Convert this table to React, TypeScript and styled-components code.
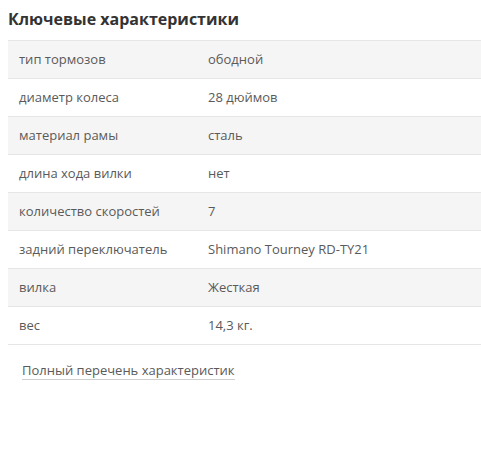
import React from "react";
import styled, { createGlobalStyle } from "styled-components";

const Global = createGlobalStyle`
  html, body { margin: 0; padding: 0; background: #fff; }
  body { font-family: "Open Sans", "Liberation Sans", sans-serif; }
`;

const Page = styled.div`
  padding: 6px 0 0 8px;
`;

const Title = styled.h2`
  margin: 0 0 8px 0;
  font-size: 16px;
  line-height: 26px;
  font-weight: 700;
  color: #333;
`;

const Table = styled.div`
  display: flex;
  flex-direction: column;
  border-bottom: 1px solid #e6e6e6;
`;

const Row = styled.div<{ $shaded: boolean }>`
  display: grid;
  grid-template-columns: 200px 1fr;
  height: 37px;
  align-items: center;
  border-top: 1px solid #e6e6e6;
  background: ${(p) => (p.$shaded ? "#f6f5f5" : "#fff")};
  font-size: 13px;
  line-height: 18px;
  color: #5a5a5a;
`;

const Label = styled.div`
  padding-left: 11px;
  padding-bottom: 1px;
`;

const Value = styled.div`
  padding-bottom: 1px;
`;

const LinkWrap = styled.div`
  padding: 13px 0 0 14px;
`;

const Link = styled.a`
  display: inline-block;
  font-size: 13px;
  line-height: 18px;
  color: #5a5a5a;
  text-decoration: none;
  border-bottom: 1px solid #cfcfcf;
`;

const rows: [string, string][] = [
  ["тип тормозов", "ободной"],
  ["диаметр колеса", "28 дюймов"],
  ["материал рамы", "сталь"],
  ["длина хода вилки", "нет"],
  ["количество скоростей", "7"],
  ["задний переключатель", "Shimano Tourney RD-TY21"],
  ["вилка", "Жесткая"],
  ["вес", "14,3 кг."],
];

export default function App() {
  return (
    <Page>
      <Global />
      <Title>Ключевые характеристики</Title>
      <Table>
        {rows.map(([k, v], i) => (
          <Row key={k} $shaded={i % 2 === 0}>
            <Label>{k}</Label>
            <Value>{v}</Value>
          </Row>
        ))}
      </Table>
      <LinkWrap>
        <Link href="#">Полный перечень характеристик</Link>
      </LinkWrap>
    </Page>
  );
}
